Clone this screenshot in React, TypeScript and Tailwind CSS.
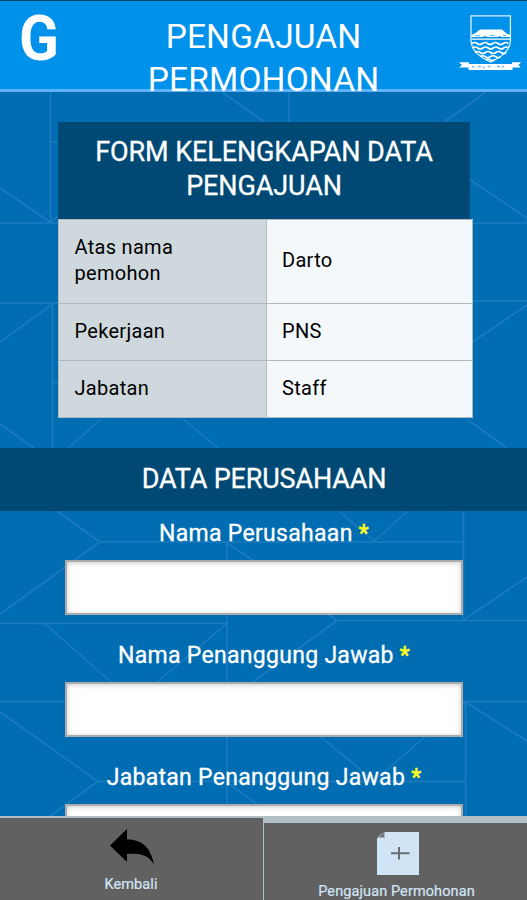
import React from "react";

const backdrop =
  "M50.5 92V222M51 142H60M0 188L50 222L60 215M0 223H527M222 92L264 122M289 92V122M444 122L486 92M466 177L527 218" +
  "M0 303H60M468 301H527M0 342L52.5 304V448M53 382.5H60M527 305L468 345M0 424L34 448M68 448L101 419M183 419L218 448M468 420L507 448" +
  "M57 511L100 542L0 614M100 542H463M227 542V816M227 543L254 561M339 511L374 541L408 511M463.5 511V620L527 577" +
  "M328 614L337 620.5H527M337 620.5L253 682M0 623.5H227L157 682M44 623L111 682M0 701.5H527M465.5 816V702L527 741M465 702L460 706" +
  "M0 712L98 781.5L50 816M98 781.5H465M228 783L258 805M320 736L374 781L426 736";

function Backdrop() {
  return (
    <svg className="absolute inset-0 h-[900px] w-[527px]" viewBox="0 0 527 900" fill="none" stroke="#1c7bbf" strokeWidth="1.6">
      <path d={backdrop} />
    </svg>
  );
}

function Crest() {
  return (
    <svg className="mt-[13px] h-14 w-[62px] shrink-0" viewBox="459 14 62 56" fill="none" stroke="#fff">
      <path d="M471 15.9H510.4V41C510 52 499 58 490.5 62C482 58 471.5 52 471 41Z" strokeWidth="1.3" stroke="#dff1ff" />
      <path d="M471.5 37V35L475.5 33L480 29.5H502L506 33L510 35V37Z" fill="#fff" stroke="none" />
      <path d="M475 35.6h5M483 36.4h4M490 35.6h5M498 36.4h3M503 35.6h3" stroke="#58b5f3" strokeWidth="1" />
      <path d="M471.5 39.2H510" strokeWidth="1.2" />
      <path d="M472 43.5q2.6-2 5.2 0t5.2 0t5.2 0t5.2 0t5.2 0t5.2 0t5.2 0M472.5 48q2.6-2 5.2 0t5.2 0t5.2 0t5.2 0t5.2 0t5.2 0t5.2 0M475 52.5q2.6-2 5.2 0t5.2 0t5.2 0t5.2 0t5.2 0t5.2 0M480 56.7q2.6-2 5.2 0t5.2 0t5.2 0t5 0M486 60q2.5-1.5 4.5 0t4.5-.5" strokeWidth="1.6" />
      <path d="M459 62.3H469V64H512V62.3H521L518.5 65L520.5 67.5H512.5V70H468.5V67.5H459L462 65Z" fill="#fff" stroke="none" />
      <path d="M472 67.5L474 66M478 66.5h3M482.5 67.5h2M488 66.5h2.5M497 66.5h3M502 67.5l2-1.5" stroke="#6bbcf5" strokeWidth="1.5" />
    </svg>
  );
}

function Header() {
  return (
    <header className="relative z-10 flex h-[92px] shrink-0 border-t border-t-[#073f6b] bg-[#0091eb] shadow-[inset_0_-3px_0_#5eb2fa]">
      <div className="w-[79px] shrink-0 pl-[19px]">
        <div className="w-[42px] origin-left scale-x-[0.93] text-[63px] leading-[75px] font-bold">G</div>
      </div>
      <h1 className="min-w-0 flex-1 pt-[14px] text-center text-[33.5px] leading-[43px] tracking-[0.15px]">
        <span className="block">PENGAJUAN</span>
        <span className="block">PERMOHONAN</span>
      </h1>
      <div className="flex w-[79px] shrink-0 justify-end pr-1.5">
        <Crest />
      </div>
    </header>
  );
}

function Row({ label, value, height }: { label: React.ReactNode; value: string; height: string }) {
  return (
    <div className={`flex ${height} border-b border-[#acbac1] text-[20px] leading-[26px] tracking-[0.3px] text-black`}>
      <div className="flex w-[208px] items-center border-r border-[#acbac1] bg-[#cfd8dd] pb-[3px] pl-[15.5px]">{label}</div>
      <div className="flex flex-1 items-center bg-[#f5f8fb] pb-[3px] pl-[15px]">{value}</div>
    </div>
  );
}

function Field({ label }: { label: string }) {
  return (
    <label className="block h-[122px] shrink-0">
      <span className="block h-[49px] pl-px text-center text-[23px] leading-[46px] tracking-[0.3px] [-webkit-text-stroke:0.3px]">
        {label} <span className="text-[#ffff1a] [-webkit-text-stroke:0.6px]">*</span>
      </span>
      <input className="mx-auto block h-[55px] w-[398px] border-2 border-[#ababad] bg-white shadow-[inset_0_1px_5px_#ccc]" />
    </label>
  );
}

export default function App() {
  return (
    <div className="relative flex h-[900px] w-[527px] flex-col overflow-hidden bg-[#006db2] font-[Roboto,sans-serif] text-white">
      <Backdrop />
      <Header />
      <main className="relative min-h-0 flex-1 overflow-hidden">
        <section className="mt-[30px] ml-[58px] w-[415px]">
          <h2 className="h-[97px] w-[412px] bg-[#004974] pt-[13px] text-center text-[27px] leading-[34px] tracking-[-0.1px] [-webkit-text-stroke:0.3px]">
            FORM KELENGKAPAN DATA
            <br />
            PENGAJUAN
          </h2>
          <div className="border border-b-0 border-[#acbac1]">
            <Row label={<>Atas nama<br />pemohon</>} value="Darto" height="h-[84px]" />
            <Row label="Pekerjaan" value="PNS" height="h-[57px]" />
            <Row label="Jabatan" value="Staff" height="h-[57px]" />
          </div>
        </section>
        <h2 className="mt-[30px] h-[63px] bg-[#004974] pl-px text-center text-[27px] leading-[63px] tracking-[-0.15px] [-webkit-text-stroke:0.3px]">DATA PERUSAHAAN</h2>
        <form>
          <Field label="Nama Perusahaan" />
          <Field label="Nama Penanggung Jawab" />
          <Field label="Jabatan Penanggung Jawab" />
        </form>
      </main>
      <nav className="relative flex h-[84px] shrink-0 text-[14.5px] leading-[18px] tracking-[0.1px] text-[#d3e5f5] [-webkit-text-stroke:0.2px]">
        <button className="flex w-[264px] flex-col items-center border-t-2 border-r border-[#b0bec5] bg-[#616161] pr-px">
          <svg className="mt-[11px] ml-px h-[36px] w-[44px]" viewBox="0 0 44 37" preserveAspectRatio="none" fill="#000" stroke="none">
            <path d="M0 17L17 0V10.5C33 11 41 20 44 36.5C39 27.5 32 24.5 17 25.5V34Z" />
          </svg>
          <span className="mt-[11px]">Kembali</span>
        </button>
        <button className="flex flex-1 flex-col items-center border-t-[7px] border-[#b0bec5] bg-[#616161] pl-0.5">
          <svg className="mt-[9px] ml-0.5 h-[43px] w-[42px] shrink-0" viewBox="0 0 42 43">
            <path d="M7.5 0H42V43H0V6H7.5Z" fill="#d1e4f5" />
            <path d="M0 6L7 0V6Z" fill="#616161" />
            <path d="M1 5.3H7.3V.8M1 5L6.5 1" fill="none" stroke="#aebecb" strokeWidth="1" />
            <path d="M14 21.3H32.5M22 15V27.5" fill="none" stroke="#686d72" strokeWidth="2" />
          </svg>
          <span className="mt-[8px]">Pengajuan Permohonan</span>
        </button>
      </nav>
    </div>
  );
}
